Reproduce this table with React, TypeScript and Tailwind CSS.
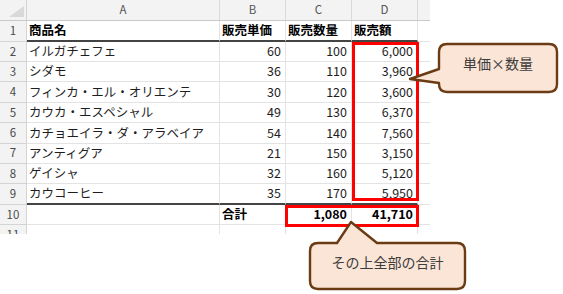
import React from "react";

const COLS = [
  { key: "A", w: "w-[193px]" },
  { key: "B", w: "w-[66px]" },
  { key: "C", w: "w-[66px]" },
  { key: "D", w: "w-[66px]" },
];

const ROWS: [string, number, number, string][] = [
  ["イルガチェフェ", 60, 100, "6,000"],
  ["シダモ", 36, 110, "3,960"],
  ["フィンカ・エル・オリエンテ", 30, 120, "3,600"],
  ["カウカ・エスペシャル", 49, 130, "6,370"],
  ["カチョエイラ・ダ・アラベイア", 54, 140, "7,560"],
  ["アンティグア", 21, 150, "3,150"],
  ["ゲイシャ", 32, 160, "5,120"],
  ["カウコーヒー", 35, 170, "5,950"],
];

function RowNum({ n }: { n: number | string }) {
  return (
    <div className="w-[27px] shrink-0 flex items-center justify-center bg-[#f3f3f3] border-r border-b border-[#d4d4d4] text-[11.5px] text-[#4a4a4a]">
      {n}
    </div>
  );
}

function Cell({
  w,
  children,
  right,
  bold,
  thick,
}: {
  w: string;
  children?: React.ReactNode;
  right?: boolean;
  bold?: boolean;
  thick?: boolean;
}) {
  return (
    <div
      className={`${w} shrink-0 flex items-center border-r border-[#e3e3e3] ${
        thick ? "border-b-2 border-b-[#444]" : "border-b border-b-[#e3e3e3]"
      } ${right ? "justify-end pr-[4px]" : "pl-[2px]"} ${bold ? "font-bold text-black" : "text-[#1e1e1e]"}`}
    >
      {children}
    </div>
  );
}

function Tail() {
  return <div className="w-[12px] shrink-0 border-b border-[#e3e3e3]" />;
}

export default function App() {
  return (
    <div className="relative w-[563px] h-[294px] bg-white overflow-hidden font-['Noto_Sans_CJK_JP',sans-serif]">
      {/* Sheet */}
      <div className="w-[430px] h-[234px] overflow-hidden text-[12.5px] leading-none">
        {/* column letters */}
        <div className="flex h-[21px] bg-[#f3f3f3] border-b border-[#c9c9c9] text-[11.5px] text-[#555]">
          <div className="w-[27px] shrink-0 flex items-end justify-end pr-[2px] pb-[3px] border-r border-[#d4d4d4]">
            <svg width="15" height="11" viewBox="0 0 15 11">
              <polygon points="15,0 15,11 0,11" fill="#d9d9d9" />
            </svg>
          </div>
          {COLS.map((c) => (
            <div key={c.key} className={`${c.w} shrink-0 flex items-center justify-center border-r border-[#dadada]`}>
              {c.key}
            </div>
          ))}
          <div className="w-[12px]" />
        </div>

        {/* row 1 */}
        <div className="flex h-[20.6px]">
          <RowNum n={1} />
          <Cell w="w-[193px]" bold thick>商品名</Cell>
          <Cell w="w-[66px]" bold thick>販売単価</Cell>
          <Cell w="w-[66px]" bold thick>販売数量</Cell>
          <Cell w="w-[66px]" bold thick>販売額</Cell>
          <Tail />
        </div>

        {ROWS.map((r, i) => (
          <div key={r[0]} className="flex h-[20.4px]">
            <RowNum n={i + 2} />
            <Cell w="w-[193px]" thick={i === 7}>{r[0]}</Cell>
            <Cell w="w-[66px]" right thick={i === 7}>{r[1]}</Cell>
            <Cell w="w-[66px]" right thick={i === 7}>{r[2]}</Cell>
            <Cell w="w-[66px]" right thick={i === 7}>{r[3]}</Cell>
            <Tail />
          </div>
        ))}

        {/* row 10 */}
        <div className="flex h-[20.4px]">
          <RowNum n={10} />
          <Cell w="w-[193px]" />
          <Cell w="w-[66px]" bold>合計</Cell>
          <Cell w="w-[66px]" right bold>1,080</Cell>
          <Cell w="w-[66px]" right bold>41,710</Cell>
          <Tail />
        </div>

        {/* row 11 (cut) */}
        <div className="flex h-[20.4px]">
          <RowNum n={11} />
          <Cell w="w-[193px]" />
          <Cell w="w-[66px]" />
          <Cell w="w-[66px]" />
          <Cell w="w-[66px]" />
          <Tail />
        </div>
      </div>

      {/* red highlight boxes */}
      <div className="absolute left-[352px] top-[42px] w-[67px] h-[159px] border-[3px] border-[#ff0000]" />
      <div className="absolute left-[285px] top-[205px] w-[134px] h-[22px] border-[3px] border-[#ff0000]" />

      {/* callout: 単価×数量 */}
      <div className="absolute left-[406px] top-[41px] w-[155px] h-[54px]">
        <svg width="155" height="54" viewBox="406 41 155 54" className="absolute inset-0">
          <path
            d="M447,44 H549 Q557,44 557,52 V84 Q557,92 549,92 H447 Q439,92 439,84 V83 L410,79 L439,69 V52 Q439,44 447,44 Z"
            fill="#fbe5d6"
            stroke="#6b3b14"
            strokeWidth="2.4"
            strokeLinejoin="round"
          />
        </svg>
        <div className="absolute left-[33px] w-[118px] top-[12px] text-center text-[14px] text-[#3c3c3c]">単価×数量</div>
      </div>

      {/* callout: その上全部の合計 */}
      <div className="absolute left-[307px] top-[219px] w-[161px] h-[73px]">
        <svg width="161" height="73" viewBox="307 219 161 73" className="absolute inset-0">
          <path
            d="M318,243 H337 L351,222 L377,243 H457 Q465,243 465,251 V281 Q465,289 457,289 H318 Q310,289 310,281 V251 Q310,243 318,243 Z"
            fill="#fbe5d6"
            stroke="#6b3b14"
            strokeWidth="2.4"
            strokeLinejoin="round"
          />
        </svg>
        <div className="absolute left-[3px] w-[155px] top-[33px] text-center text-[14px] text-[#3c3c3c]">その上全部の合計</div>
      </div>
    </div>
  );
}
